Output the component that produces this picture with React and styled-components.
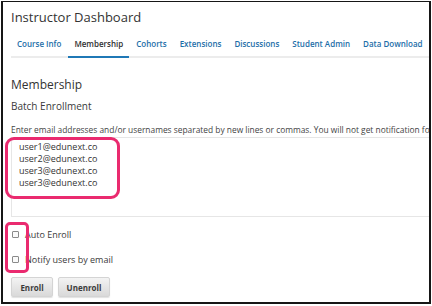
import React from 'react'
import styled, { createGlobalStyle } from 'styled-components'

const GlobalStyle = createGlobalStyle`
  html, body {
    margin: 0;
    padding: 0;
    background: #fff;
    font-family: "Open Sans", "Noto Sans", sans-serif;
  }
`;

const Frame = styled.div`
  position: relative;
  box-sizing: border-box;
  margin: 1px 0 0 1px;
  width: 430px;
  height: 303px;
  border: 2px solid #161616;
  border-top-width: 1px;
  overflow: hidden;
  padding: 0 0 0 8px;
  color: #3c3c3c;
`;

const Title = styled.h1`
  margin: 6px 0 0;
  font-size: 13px;
  line-height: 18px;
  font-weight: 400;
  color: #333;
`;

const Tabs = styled.nav`
  display: flex;
  gap: 1px;
  margin-top: 3px;
  border-bottom: 2px solid #ececec;
  white-space: nowrap;
`;

const Tab = styled.span`
  padding: 0 6px;
  height: 27px;
  line-height: 29px;
  font-size: 8px;
  font-weight: 600;
  color: ${p => (p.$active ? '#2f2f2f' : '#1d6ea8')};
  border-bottom: 2px solid ${p => (p.$active ? '#1f78b6' : 'transparent')};
  margin-bottom: -2px;
`;

const Heading = styled.h2`
  margin: 19px 0 0;
  font-size: 12px;
  line-height: 16px;
  font-weight: 400;
  color: #333;
`;

const SubHeading = styled.h3`
  margin: 6px 0 0;
  font-size: 10px;
  line-height: 14px;
  font-weight: 400;
  color: #3a3a3a;
`;

const Hint = styled.p`
  margin: 11px 0 0;
  font-size: 8.4px;
  line-height: 12px;
  color: #444;
  white-space: nowrap;
`;

const Entry = styled.textarea`
  display: block;
  box-sizing: border-box;
  margin: 1px 0 0;
  width: 460px;
  height: 80px;
  padding: 3px 7px;
  border: 1.5px solid #e6e6e6;
  border-radius: 0;
  resize: none;
  font-family: "Open Sans", "Noto Sans", sans-serif;
  font-size: 9px;
  line-height: 12px;
  color: #333;
  background: #fff;
  outline: none;
`;

const Options = styled.div`
  display: flex;
  flex-direction: column;
  gap: 10px;
  margin-top: 10px;
`;

const Option = styled.label`
  display: flex;
  align-items: center;
  gap: 6px;
  height: 15px;
  font-size: 9px;
  color: #3a3a3a;
`;

const Box = styled.span`
  box-sizing: border-box;
  width: 7px;
  height: 7px;
  margin-left: 1px;
  border: 1px solid #8a8a8a;
  border-radius: 1px;
  background: #fafafa;
`;

const Actions = styled.div`
  display: flex;
  gap: 5px;
  margin-top: 10px;
`;

const Button = styled.button`
  box-sizing: border-box;
  height: 20px;
  width: ${p => p.$w}px;
  padding: 0;
  border: 1px solid #d4d4d4;
  border-radius: 2px;
  background: linear-gradient(#f3f3f3, #d9d9d9);
  box-shadow: 0 1px 1px rgba(0, 0, 0, 0.12);
  font-family: "Open Sans", "Noto Sans", sans-serif;
  font-size: 8px;
  font-weight: 700;
  color: #3a3a3a;
`;

const Mark = styled.div`
  position: absolute;
  box-sizing: border-box;
  left: ${p => p.$x}px;
  top: ${p => p.$y}px;
  width: ${p => p.$w}px;
  height: ${p => p.$h}px;
  border: 3px solid #ea2a6f;
  border-radius: ${p => p.$r}px;
  pointer-events: none;
`;

const tabs = ['Course Info', 'Membership', 'Cohorts', 'Extensions', 'Discussions', 'Student Admin', 'Data Download'];

const emails = 'user1@edunext.co\nuser2@edunext.co\nuser3@edunext.co\nuser3@edunext.co';

export default function App() {
  return (
    <>
      <GlobalStyle />
      <Frame>
        <Title>Instructor Dashboard</Title>
        <Tabs>
          {tabs.map(t => (
            <Tab key={t} $active={t === 'Membership'}>{t}</Tab>
          ))}
        </Tabs>
        <Heading>Membership</Heading>
        <SubHeading>Batch Enrollment</SubHeading>
        <Hint>Enter email addresses and/or usernames separated by new lines or commas. You will not get notification for emails that bounce, so please double-check spelling.</Hint>
        <Entry readOnly value={emails} />
        <Options>
          <Option><Box />Auto Enroll</Option>
          <Option><Box />Notify users by email</Option>
        </Options>
        <Actions>
          <Button $w={42}>Enroll</Button>
          <Button $w={52}>Unenroll</Button>
        </Actions>
        <Mark $x={2} $y={135} $w={115} $h={62} $r={9} />
        <Mark $x={2} $y={220} $w={24} $h={51} $r={5} />
      </Frame>
    </>
  )
}
